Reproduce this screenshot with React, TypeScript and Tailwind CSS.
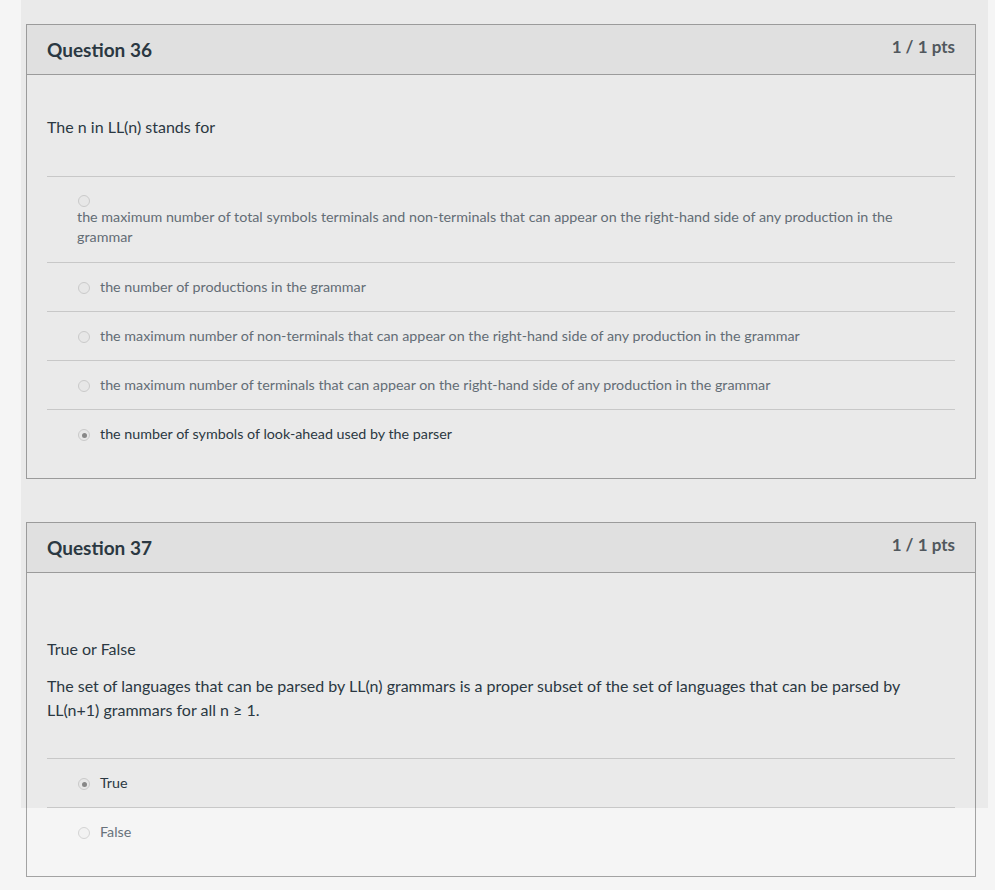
import React from "react";

type Answer = { text: string; selected?: boolean; block?: boolean };

const q36: Answer[] = [
  {
    text: "the maximum number of total symbols terminals and non-terminals that can appear on the right-hand side of any production in the grammar",
    block: true,
  },
  { text: "the number of productions in the grammar" },
  { text: "the maximum number of non-terminals that can appear on the right-hand side of any production in the grammar" },
  { text: "the maximum number of terminals that can appear on the right-hand side of any production in the grammar" },
  { text: "the number of symbols of look-ahead used by the parser", selected: true },
];

const q37: Answer[] = [{ text: "True", selected: true }, { text: "False" }];

function Radio({ checked }: { checked?: boolean }) {
  return (
    <span className="flex h-3 w-3 shrink-0 items-center justify-center rounded-full border border-[#d4d4d4] bg-[#f2f2f2]">
      {checked && <span className="h-[5px] w-[5px] rounded-full bg-[#8e8e8e]" />}
    </span>
  );
}

function AnswerRow({ answer }: { answer: Answer }) {
  const color = answer.selected ? "text-[#2d3b45]" : "text-[#68727b]";
  if (answer.block) {
    // long label: radio sits on its own line above the text
    return (
      <div className="border-t border-[#d2d2d2] pt-[18px] pb-[15px] pl-[30px] pr-[40px]">
        <div className="ml-px">
          <Radio />
        </div>
        <p className={`text-[14.3px] leading-5 ${color}`}>{answer.text}</p>
      </div>
    );
  }
  return (
    <div className="flex items-start gap-[10px] border-t border-[#d2d2d2] py-[14px] pl-[31px]">
      <div className="mt-[5px]">
        <Radio checked={answer.selected} />
      </div>
      <p className={`text-[14.3px] leading-5 ${color}`}>{answer.text}</p>
    </div>
  );
}

function QuestionCard({
  title,
  children,
  answers,
  textClass = "mb-[37px]",
}: {
  title: string;
  children: React.ReactNode;
  answers: Answer[];
  textClass?: string;
}) {
  return (
    <div className="border border-[#a3a3a3]">
      <div className="flex h-[50px] items-start justify-between border-b border-[#a3a3a3] bg-[#ebebeb] px-5">
        <h2 className="pt-[13px] text-[19px] font-bold leading-6 text-[#2d3b45]">{title}</h2>
        <span className="pt-[10px] text-[17px] font-bold leading-6 text-[#555c63]">1 / 1 pts</span>
      </div>
      <div className="px-5 pt-[40px] pb-[20px]">
        <div className={`${textClass} text-[16px] leading-6 text-[#2d3b45]`}>{children}</div>
        <div>
          {answers.map((a) => (
            <AnswerRow key={a.text} answer={a} />
          ))}
        </div>
      </div>
    </div>
  );
}

export default function App() {
  return (
    <div className="relative min-h-[890px] bg-[#f5f5f5] font-['Lato','Liberation_Sans',sans-serif]">
      <div className="flex flex-col gap-[43px] pt-[24px] pl-[26px] pr-[19px] pb-[13px]">
        <QuestionCard title="Question 36" answers={q36}>
          <p>The n in LL(n) stands for</p>
        </QuestionCard>

        <QuestionCard title="Question 37" answers={q37} textClass="mb-[36px]">
          <p className="h-6" />
          <p>True or False</p>
          <p className="mt-[13px]">
            The set of languages that can be parsed by LL(n) grammars is a proper subset of the set of
            languages that can be parsed by LL(n+1) grammars for all n ≥ 1.
          </p>
        </QuestionCard>
      </div>

      {/* dimmed region over the page */}
      <div className="pointer-events-none absolute left-[21px] top-0 h-[808px] w-[967px] bg-black/[0.043]" />
    </div>
  );
}
